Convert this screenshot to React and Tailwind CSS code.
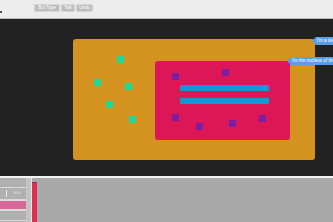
import React from "react";

const greenDots = [
  [44, 17],
  [21, 40],
  [52, 44],
  [33, 62],
  [56, 77],
];

const purpleDots = [
  [17, 12],
  [67, 8],
  [17, 53],
  [41, 62],
  [74, 59],
  [104, 54],
];

const ToolButton = ({ label, w }) => (
  <div
    className={`h-[8px] ${w} rounded-[1px] bg-[#bdbdbd] border border-[#d6d6d6] text-white text-[4.5px] leading-[6px] flex items-center justify-center`}
  >
    {label}
  </div>
);

const Tip = ({ text, className }) => (
  <div className={`absolute flex items-center ${className}`}>
    <div className="w-0 h-0 border-y-[3px] border-y-transparent border-r-[3px] border-r-[#5b9ee8]" />
    <div className="h-[8px] bg-[#5b9ee8] rounded-[1px] px-[2px] text-white text-[4.5px] leading-[8px] whitespace-nowrap">
      {text}
    </div>
  </div>
);

export default function App() {
  return (
    <div
      className="relative w-[333px] h-[222px] overflow-hidden bg-[#222222]"
      style={{ fontFamily: '"Liberation Sans", Arial, sans-serif' }}
    >
      {/* top toolbar */}
      <div className="h-[19px] bg-[#ececec] border-b border-[#bcbcbc] flex items-center">
        <div className="w-[2px] h-[2px] bg-[#555] mt-[6px]" />
        <div className="flex gap-[1px] ml-[32px] -mt-[2px]">
          <ToolButton label="Bot Type" w="w-[26px]" />
          <ToolButton label="Talk" w="w-[14px]" />
          <ToolButton label="Undo" w="w-[17px]" />
        </div>
      </div>

      {/* canvas */}
      <div className="h-[157px] pt-[20px]">
        <div className="relative ml-[73px] w-[242px] h-[121px] bg-[#d4921f] rounded-[3px]">
          {greenDots.map(([x, y], i) => (
            <div
              key={i}
              className="absolute w-[7px] h-[7px] bg-[#1ed99a]"
              style={{ left: x, top: y }}
            />
          ))}
          <div className="absolute left-[82px] top-[22px] w-[135px] h-[79px] bg-[#dc1657] rounded-[3px]">
            <div className="ml-[25px] mt-[24px] w-[89px] h-[6px] bg-[#1496d8] rounded-[1px]" />
            <div className="ml-[25px] mt-[7px] w-[89px] h-[6px] bg-[#1496d8] rounded-[1px]" />
            {purpleDots.map(([x, y], i) => (
              <div
                key={i}
                className="absolute w-[7px] h-[7px] bg-[#7b1fa2]"
                style={{ left: x, top: y }}
              />
            ))}
          </div>
        </div>
      </div>

      <Tip text="I'm a dendrite" className="left-[312px] top-[37px]" />
      <Tip text="I'm the nucleus of the cell" className="left-[287px] top-[57px]" />

      {/* bottom panel */}
      <div className="h-[2px] bg-[#f2f2f2]" />
      <div className="h-[44px] flex bg-[#a9a9a9]">
        <div className="w-[26px] flex flex-col gap-[1px] bg-[#dadada] pt-[0px]">
          <div className="h-[9px] bg-[#b0b0b0]" />
          <div className="h-[11px] bg-[#b0b0b0] flex items-center">
            <span className="ml-[6px] w-[1px] h-[7px] bg-[#eeeeee]" />
            <span className="ml-[6px] text-[3.5px] text-[#e8e8e8]">3x3x</span>
          </div>
          <div className="h-[8px] bg-[#d8689b] mt-[1px]" />
          <div className="h-[9px] bg-[#b0b0b0] mt-[1px]" />
          <div className="flex-1 bg-[#b0b0b0]" />
        </div>
        <div className="w-[5px] bg-[#c4c4c4]" />
        <div className="w-[1px] bg-[#e6e6e6]" />
        <div className="w-[5px] pt-[4px]">
          <div className="h-full bg-[#de2f52] rounded-t-[1px] border-t border-[#a02040]" />
        </div>
        <div className="flex-1" />
      </div>
    </div>
  );
}
